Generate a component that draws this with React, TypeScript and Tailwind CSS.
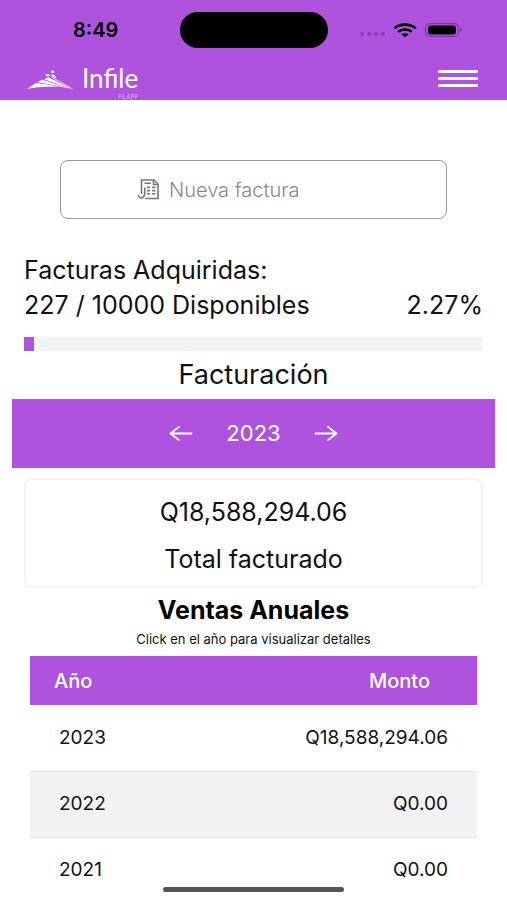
import { useState } from "react";

type Venta = {
  year: number;
  monto: string;
};

const ventas: Venta[] = [
  { year: 2023, monto: "Q18,588,294.06" },
  { year: 2022, monto: "Q0.00" },
  { year: 2021, monto: "Q0.00" },
];

function StatusBar() {
  return (
    <div className="flex h-[60px] items-center justify-between pl-[73px] pr-11">
      <span className="w-[74px] text-xl font-semibold text-black">8:49</span>
      <div className="h-9 w-[148px] rounded-full bg-black" />
      <div className="flex items-center gap-2">
        <div className="flex gap-[3px] pt-2">
          <span className="h-1 w-1 rounded-full bg-[#8a3fb0]" />
          <span className="h-1 w-1 rounded-full bg-[#8a3fb0]" />
          <span className="h-1 w-1 rounded-full bg-[#8a3fb0]" />
          <span className="h-1 w-1 rounded-full bg-[#8a3fb0]" />
        </div>
        <svg width="24" height="15" viewBox="0 0 24 15" fill="none" stroke="#000" strokeWidth="2.6">
          <path d="M1.4 5.2C7.2 0.4 16.8 0.4 22.6 5.2" />
          <path d="M5.2 8.8C9 5.8 15 5.8 18.8 8.8" />
          <path d="M8.4 11.2C10.4 9.8 13.6 9.8 15.6 11.2L12 14.2Z" fill="#000" stroke="none" />
        </svg>
        <svg width="38" height="14" viewBox="0 0 38 14" fill="none">
          <rect x="0.6" y="0.6" width="33" height="12.8" rx="4.5" stroke="#7d38a0" strokeWidth="1.2" />
          <rect x="3" y="2.5" width="28" height="9" rx="3" fill="#000" />
          <path d="M35 4.8C37.6 5.6 37.6 8.4 35 9.2Z" fill="#7d38a0" />
        </svg>
      </div>
    </div>
  );
}

function Logo() {
  return (
    <a href="#inicio" aria-label="Infile" className="flex items-center gap-2 text-white">
      <svg width="47" height="20" viewBox="0 0 47 20" fill="#fff">
        <path d="M0 19L8.5 13.2C12 13 17 13.4 33 17C20 16.6 8 17 0 19Z" />
        <path d="M10.5 12L15.5 9.8L42 18.6L33 16.4Z" />
        <path d="M17 9.2L21.5 7.2L45 19.2L38 16.8Z" />
        <path d="M23 6.6L27 8L47 19.6L43 18Z" />
        <path d="M23.4 4.6L27.6 5L29.4 8.2L25.6 7Z" />
        <path d="M18.6 4.4L22 4L22.8 6L19.4 6.4Z" />
        <path d="M23.8 1L26.8 0.6L27.4 2.8L24.6 3Z" />
      </svg>
      <span className="flex flex-col pt-[3px]">
        <span className="font-[Lato,sans-serif] text-[26px] leading-[31px]">Infile</span>
        <span className="self-end font-[Inter,sans-serif] text-[6px] leading-[6px] text-[#dcb0f0]">FILAPP</span>
      </span>
    </a>
  );
}

function FacturaIcon() {
  return (
    <svg width="22" height="21" viewBox="0 0 22 21" fill="none" stroke="#777" strokeWidth="1.6">
      <path d="M4.5 15V1H17L21 5V19.5H8" />
      <path d="M16.5 1V5.5H21" />
      <path d="M0.8 16.2L3.8 19.2C6.2 18.6 7.8 16.6 7.8 14V8.5" />
      <path d="M7.5 4.2H14M10 8.4H13M15 8.4H18.5M10 11.6H13M15 11.6H18.5M10 14.8H13M15 14.8H18.5" />
    </svg>
  );
}

function Arrow({ left }: { left?: boolean }) {
  return (
    <svg width="24" height="16" viewBox="0 0 24 16" fill="none" stroke="#fff" strokeWidth="1.8" strokeLinecap="round" strokeLinejoin="round">
      {left ? (
        <path d="M22.5 7.5H1.5M10 0.9L1.5 7.5L10 14.1" />
      ) : (
        <path d="M1.5 7.5H22.5M14 0.9L22.5 7.5L14 14.1" />
      )}
    </svg>
  );
}

export default function App() {
  const [year, setYear] = useState(2023);
  const disponibles = 227;
  const total = 10000;
  const percent = (disponibles / total) * 100;

  return (
    <div className="min-h-screen bg-white font-[Inter,sans-serif] text-[#111]">
      <header className="bg-[#af52de]">
        <StatusBar />
        <div className="flex h-10 items-center justify-between pl-[27px] pr-[29px]">
          <Logo />
          <button type="button" aria-label="Menú" className="flex w-10 flex-col gap-1 pb-1">
            <span className="h-[3px] rounded-full bg-white" />
            <span className="h-[3px] rounded-full bg-white" />
            <span className="h-[3px] rounded-full bg-white" />
          </button>
        </div>
      </header>

      <main className="px-3 pt-[60px]">
        <div className="px-12">
          <button
            type="button"
            className="flex h-[59px] w-full items-center gap-[10px] rounded-lg border border-[#999] pl-[76px] text-xl font-light text-[#888]"
          >
            <FacturaIcon />
            Nueva factura
          </button>
        </div>

        <section className="px-3 pt-[34px] text-[25px] leading-[35px]">
          <p>Facturas Adquiridas:</p>
          <div className="flex justify-between">
            <span>{disponibles} / {total} Disponibles</span>
            <span>{percent.toFixed(2)}%</span>
          </div>
          <div className="mt-[14px] h-[14px] bg-[#f3f3f3]">
            <div className="h-full bg-[#af52de]" style={{ width: `${percent}%` }} />
          </div>
        </section>

        <h2 className="py-2 text-center text-[27px] leading-8">Facturación</h2>
        <div className="flex h-[69px] items-center justify-center gap-[33px] bg-[#af52de] text-[22px] text-white">
          <button type="button" aria-label="Año anterior" onClick={() => setYear(year - 1)}>
            <Arrow left />
          </button>
          <span>{year}</span>
          <button type="button" aria-label="Año siguiente" onClick={() => setYear(year + 1)}>
            <Arrow />
          </button>
        </div>

        <section className="mx-3 mt-[10px] flex h-[110px] flex-col items-center gap-3 rounded-lg border-2 border-[#f3f3f5] pt-[15px] text-[25px] leading-[35px]">
          <p>{ventas.find((v) => v.year === year)?.monto ?? "Q0.00"}</p>
          <p>Total facturado</p>
        </section>

        <h2 className="pt-[6px] text-center text-[25px] leading-8 font-bold text-black">Ventas Anuales</h2>
        <p className="pt-[3px] pb-[3px] text-center text-[13px] leading-5">Click en el año para visualizar detalles</p>

        <div className="px-[18px] pt-1">
          <table className="w-full">
            <thead className="bg-[#af52de] text-xl text-white">
              <tr className="h-[49px]">
                <th className="pl-6 text-left font-medium">Año</th>
                <th className="pr-[47px] text-right font-medium">Monto</th>
              </tr>
            </thead>
            <tbody className="text-[19px]">
              {ventas.map((v) => (
                <tr key={v.year} className="h-[66px] border-b border-[#e2e2e2] even:bg-[#f2f2f2]">
                  <td className="pl-[29px]">
                    <button type="button" onClick={() => setYear(v.year)}>{v.year}</button>
                  </td>
                  <td className="pr-[29px] text-right">{v.monto}</td>
                </tr>
              ))}
            </tbody>
          </table>
        </div>
      </main>

      {/* home indicator */}
      <div className="fixed inset-x-0 bottom-2 mx-auto h-[5px] w-[181px] rounded-full bg-[#555]" />
    </div>
  );
}
